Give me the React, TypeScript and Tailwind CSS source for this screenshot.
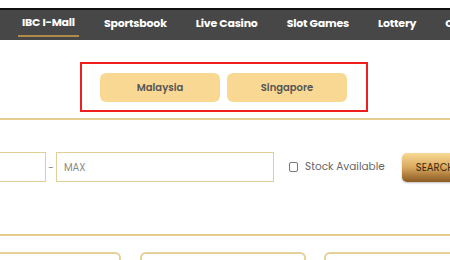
import React from "react";

const font = { fontFamily: "Poppins, 'Open Sans', 'Noto Sans', sans-serif" };

export default function App() {
  const nav = ["IBC I-Mall", "Sportsbook", "Live Casino", "Slot Games", "Lottery", "Casino"];
  return (
    <div className="w-[450px] h-[260px] overflow-hidden bg-white" style={font}>
      <div className="h-[8px] bg-white" />
      <div className="h-[32px] bg-[#474747] border-t-2 border-[#111] flex items-start pl-[18px] gap-[21px] whitespace-nowrap overflow-hidden">
        {nav.map((n, i) => (
          <div
            key={n}
            className={`shrink-0 h-[27px] flex items-center text-[11px] font-bold text-white tracking-[-0.2px] px-[4px] ${
              i === 0 ? "border-b-2 border-[#b08a4a]" : ""
            }`}
          >
            {n}
          </div>
        ))}
      </div>
      <div className="flex justify-center pt-[22px] pr-[3px]">
        <div className="w-[288px] h-[50px] border-2 border-[#f01d1d] flex items-center justify-center gap-[7px]">
          {["Malaysia", "Singapore"].map((c) => (
            <div
              key={c}
              className="w-[120px] h-[29px] rounded-[6px] bg-[#f9d893] flex items-center justify-center text-[10px] font-semibold text-[#555]"
            >
              {c}
            </div>
          ))}
        </div>
      </div>
      <div className="mt-[6px] h-[2px] bg-[#e2cc8e]" />
      <div className="flex items-center mt-[32px] h-[30px] whitespace-nowrap">
        <div className="shrink-0 w-[46px] h-[30px] border border-[#e2cf98] border-l-0" />
        <div className="shrink-0 w-[10px] text-center text-[10px] text-[#888]">-</div>
        <div className="shrink-0 w-[218px] h-[30px] border border-[#e2cf98] flex items-center pl-[7px] text-[10px] text-[#888]">
          MAX
        </div>
        <div className="shrink-0 ml-[15px] w-[9px] h-[10px] border border-[#777] rounded-[2px]" />
        <div className="shrink-0 ml-[7px] text-[10.5px] text-[#666]">Stock Available</div>
        <div className="shrink-0 ml-[17px] w-[60px] h-[29px] rounded-l-[5px] bg-gradient-to-b from-[#f8d995] via-[#d9a85e] to-[#8a5a22] flex items-center pl-[14px] text-[10px] text-[#3a2a10] shadow-[0_1px_2px_rgba(0,0,0,0.25)]">
          SEARCH
        </div>
      </div>
      <div className="mt-[52px] h-[2px] bg-[#e2cc8e]" />
      <div className="flex mt-[16px]">
        <div className="shrink-0 w-[121px] h-[20px] border-t-2 border-r-2 border-[#e5d095] rounded-tr-[6px]" />
        <div className="shrink-0 ml-[19px] w-[166px] h-[20px] border-t-2 border-x-2 border-[#e5d095] rounded-t-[6px]" />
        <div className="shrink-0 ml-[18px] w-[140px] h-[20px] border-t-2 border-l-2 border-[#e5d095] rounded-tl-[6px]" />
      </div>
    </div>
  );
}
